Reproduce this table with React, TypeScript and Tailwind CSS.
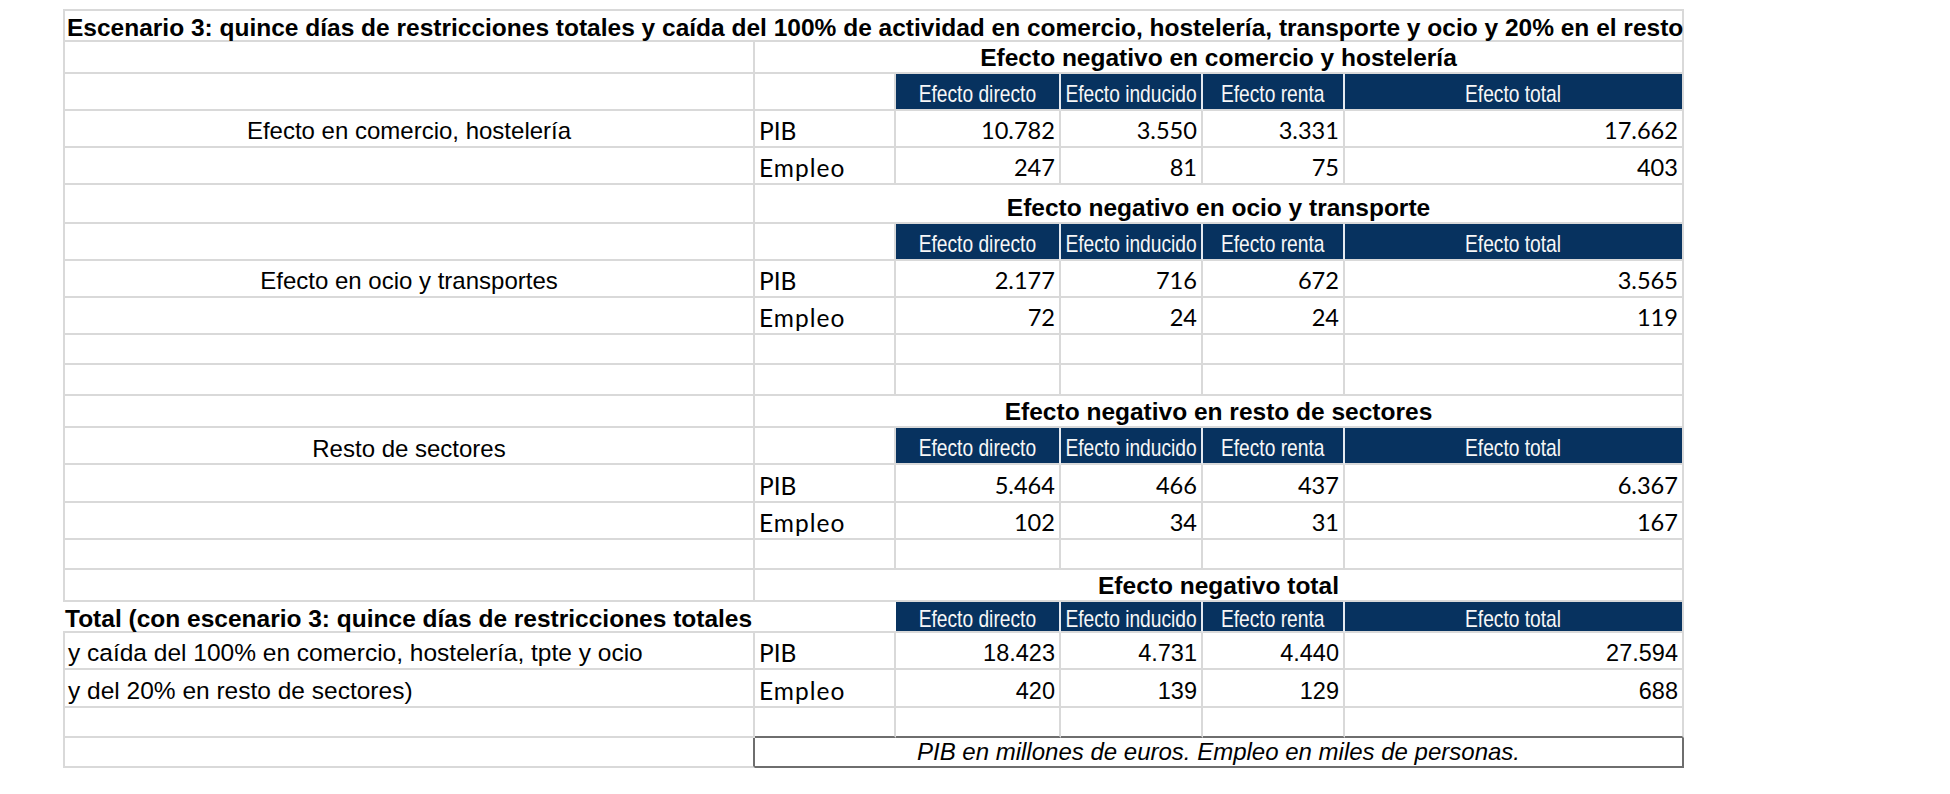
import React from "react";

const G = "grid grid-cols-[692px_141px_165px_142px_142px_339px]";
const LN = "border-[#d9d9d9]";
const ARIAL = "font-['Liberation_Sans',Arial,sans-serif]";
const CAL = "font-['Lato','Open_Sans',sans-serif]";

type Kids = { children?: React.ReactNode; className?: string };

function TitleRow() {
  return (
    <div className={`${G} h-[33px]`}>
      <div className={`col-span-6 flex items-end border-2 ${LN} pl-[2px]`}>
        <span className={`${ARIAL} font-bold text-[24.5px] leading-none text-black whitespace-nowrap`}>
          Escenario 3: quince días de restricciones totales y caída del 100% de actividad en comercio, hostelería, transporte y ocio y 20% en el resto
        </span>
      </div>
    </div>
  );
}

function HeadingRow({ text, h }: { text: string; h: string }) {
  return (
    <div className={`${G} ${h}`}>
      <div className={`border-l-2 border-r-2 border-b-2 ${LN}`} />
      <div className={`col-span-5 flex items-end justify-center border-r-2 border-b-2 ${LN} pb-[2px]`}>
        <span className={`${ARIAL} font-bold text-[24.5px] leading-none text-black whitespace-nowrap`}>{text}</span>
      </div>
    </div>
  );
}

function NavyCells() {
  const labels = ["Efecto directo", "Efecto inducido", "Efecto renta", "Efecto total"];
  return (
    <>
      {labels.map((t, i) => (
        <div
          key={t}
          className={`flex items-center justify-center pt-[4px] bg-[#07325f] border-b-2 border-b-[#d9d9d9] border-r-2 ${
            i < 3 ? "border-r-[#e4e9f0]" : "border-r-[#d9d9d9]"
          }`}
        >
          <span
            className={`${ARIAL} inline-block scale-x-[0.8] origin-center text-[24px] leading-none text-[#f7f7f7] whitespace-nowrap`}
          >
            {t}
          </span>
        </div>
      ))}
    </>
  );
}

function HeaderRow({ h, a }: { h: string; a?: React.ReactNode }) {
  return (
    <div className={`${G} ${h}`}>
      <div className={`flex items-end justify-center border-l-2 border-r-2 border-b-2 ${LN} pb-[2px]`}>{a}</div>
      <div className={`border-r-2 border-b-2 ${LN}`} />
      <NavyCells />
    </div>
  );
}

function ALabel({ children, size }: Kids & { size?: string }) {
  return (
    <span className={`${ARIAL} ${size ?? "text-[24px]"} leading-none text-black whitespace-nowrap`}>{children}</span>
  );
}

function DataRow({
  h,
  a,
  aLeft,
  label,
  nums,
  arialNums,
  pb,
}: {
  h: string;
  a?: React.ReactNode;
  aLeft?: boolean;
  label: string;
  nums: string[];
  arialNums?: boolean;
  pb: string;
}) {
  const numFont = arialNums ? `${ARIAL} text-[23.5px]` : `${CAL} text-[23.6px]`;
  const track = label === "Empleo" ? "tracking-[1px]" : "";
  return (
    <div className={`${G} ${h}`}>
      <div
        className={`flex items-end ${aLeft ? "justify-start pl-[3px]" : "justify-center"} border-l-2 border-r-2 border-b-2 ${LN} ${pb}`}
      >
        {a}
      </div>
      <div className={`flex items-end pl-[4px] border-r-2 border-b-2 ${LN} pb-[3px]`}>
        <span className={`${CAL} text-[24.5px] leading-none text-black ${track}`}>{label}</span>
      </div>
      {nums.map((n, i) => (
        <div key={i} className={`flex items-end justify-end pr-[4px] border-r-2 border-b-2 ${LN} ${pb}`}>
          <span className={`${numFont} leading-none text-black`}>{n}</span>
        </div>
      ))}
    </div>
  );
}

function EmptyRow({ h, dark }: { h: string; dark?: boolean }) {
  const b = dark ? "border-b-[#6e6e6e]" : "";
  return (
    <div className={`${G} ${h}`}>
      <div className={`border-l-2 border-r-2 border-b-2 ${LN}`} />
      <div className={`border-r-2 border-b-2 ${LN} ${b}`} />
      <div className={`border-r-2 border-b-2 ${LN} ${b}`} />
      <div className={`border-r-2 border-b-2 ${LN} ${b}`} />
      <div className={`border-r-2 border-b-2 ${LN} ${b}`} />
      <div className={`border-r-2 border-b-2 ${LN} ${b}`} />
    </div>
  );
}

function TotalHeaderRow() {
  return (
    <div className={`${G} h-[31px]`}>
      <div className={`col-span-2 flex items-end border-b-2 ${LN} pl-[2px]`}>
        <span className={`${ARIAL} font-bold text-[24.5px] leading-none text-black whitespace-nowrap`}>
          Total (con escenario 3: quince días de restricciones totales
        </span>
      </div>
      <NavyCells />
    </div>
  );
}

function FooterRow() {
  return (
    <div className={`${G} h-[30px]`}>
      <div className={`border-l-2 border-b-2 ${LN} border-r-2 border-r-[#6e6e6e]`} />
      <div className="col-span-5 flex items-center justify-center border-r-2 border-b-2 border-[#6e6e6e]">
        <span className={`${ARIAL} italic text-[24px] leading-none text-black whitespace-nowrap`}>
          PIB en millones de euros. Empleo en miles de personas.
        </span>
      </div>
    </div>
  );
}

export default function App() {
  return (
    <div className="w-[1950px] h-[794px] bg-white pl-[63px] pt-[9px] overflow-hidden">
      <div className="w-[1621px] flex flex-col">
        <TitleRow />
        <HeadingRow h="h-[32px]" text="Efecto negativo en comercio y hostelería" />
        <HeaderRow h="h-[37px]" />
        <DataRow
          h="h-[37px]"
          pb="pb-[3px]"
          a={<ALabel>Efecto en comercio, hostelería</ALabel>}
          label="PIB"
          nums={["10.782", "3.550", "3.331", "17.662"]}
        />
        <DataRow h="h-[37px]" pb="pb-[3px]" label="Empleo" nums={["247", "81", "75", "403"]} />
        <HeadingRow h="h-[39px]" text="Efecto negativo en ocio y transporte" />
        <HeaderRow h="h-[37px]" />
        <DataRow
          h="h-[37px]"
          pb="pb-[3px]"
          a={<ALabel>Efecto en ocio y transportes</ALabel>}
          label="PIB"
          nums={["2.177", "716", "672", "3.565"]}
        />
        <DataRow h="h-[37px]" pb="pb-[3px]" label="Empleo" nums={["72", "24", "24", "119"]} />
        <EmptyRow h="h-[30px]" />
        <EmptyRow h="h-[31px]" />
        <HeadingRow h="h-[32px]" text="Efecto negativo en resto de sectores" />
        <HeaderRow h="h-[37px]" a={<ALabel>Resto de sectores</ALabel>} />
        <DataRow h="h-[38px]" pb="pb-[3px]" label="PIB" nums={["5.464", "466", "437", "6.367"]} />
        <DataRow h="h-[37px]" pb="pb-[3px]" label="Empleo" nums={["102", "34", "31", "167"]} />
        <EmptyRow h="h-[30px]" />
        <HeadingRow h="h-[32px]" text="Efecto negativo total" />
        <TotalHeaderRow />
        <DataRow
          h="h-[37px]"
          pb="pb-[3px]"
          aLeft
          arialNums
          a={<ALabel size="text-[24.5px]">y caída del 100% en comercio, hostelería, tpte y ocio</ALabel>}
          label="PIB"
          nums={["18.423", "4.731", "4.440", "27.594"]}
        />
        <DataRow
          h="h-[38px]"
          pb="pb-[3px]"
          aLeft
          arialNums
          a={<ALabel size="text-[24.5px]">y del 20% en resto de sectores)</ALabel>}
          label="Empleo"
          nums={["420", "139", "129", "688"]}
        />
        <EmptyRow h="h-[30px]" dark />
        <FooterRow />
      </div>
    </div>
  );
}
